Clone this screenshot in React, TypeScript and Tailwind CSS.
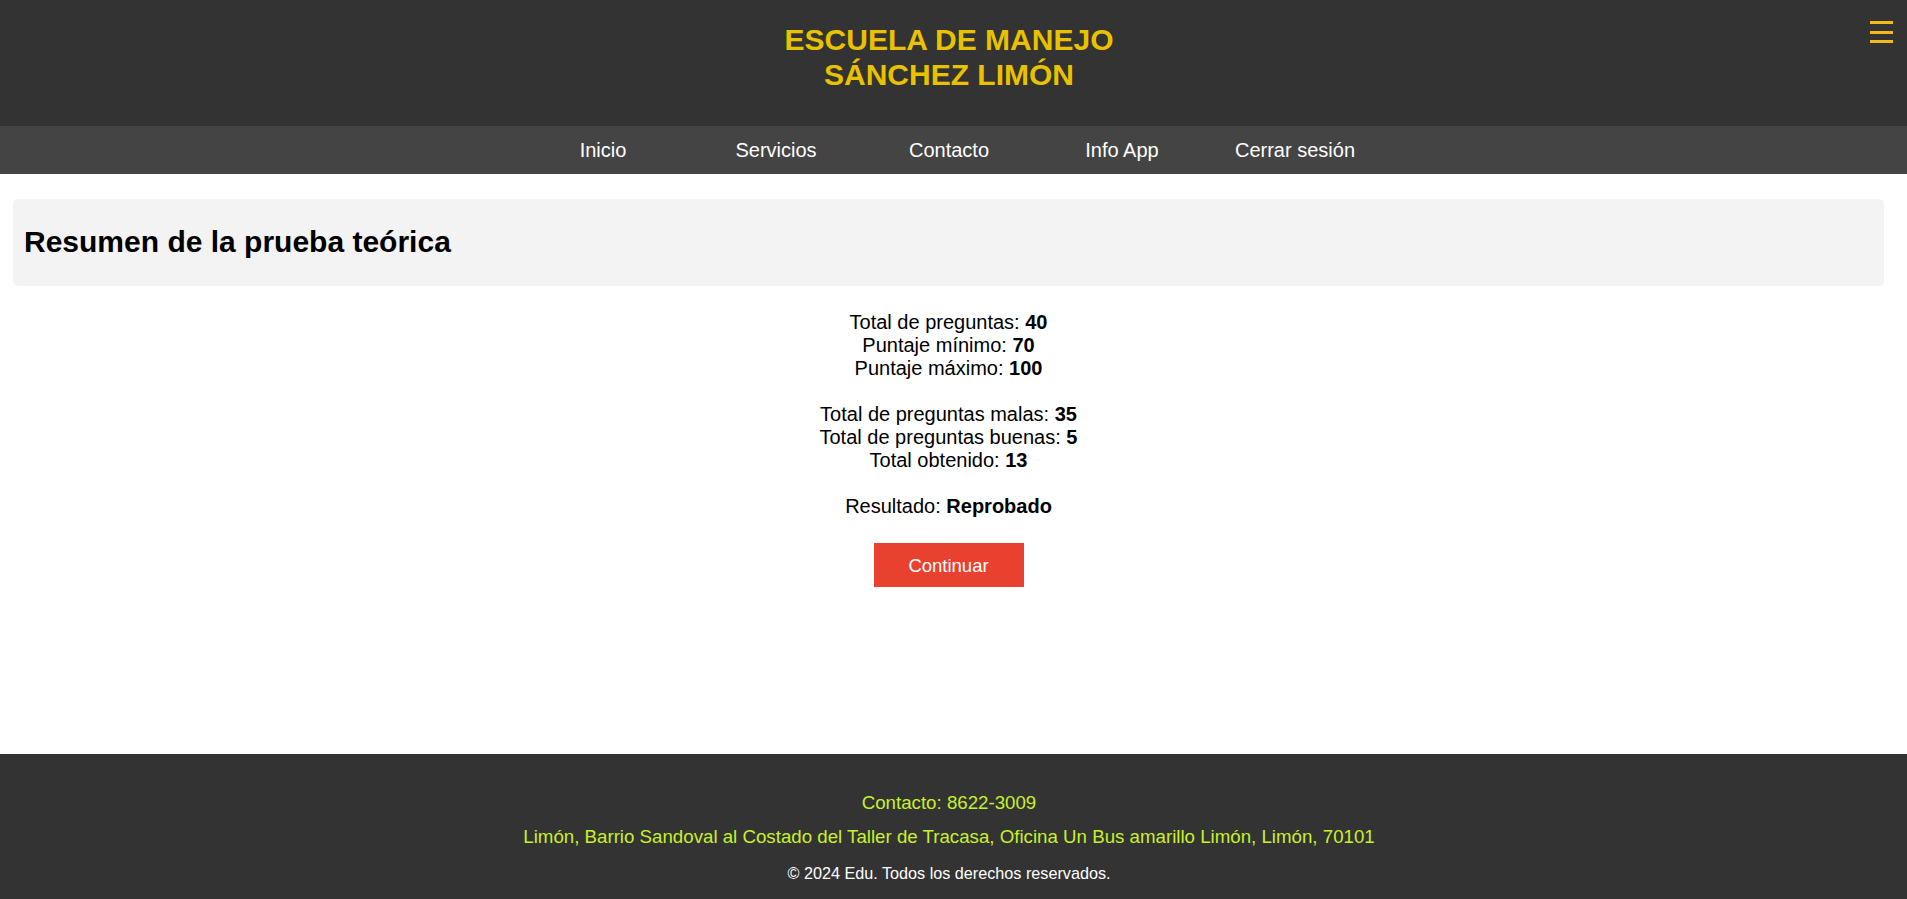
import React from "react";

const navItems = ["Inicio", "Servicios", "Contacto", "Info App", "Cerrar sesión"];

function Stat({ label, value }: { label: string; value: string }) {
  return (
    <p>
      {label} <b>{value}</b>
    </p>
  );
}

export default function App() {
  return (
    <div className="min-h-screen flex flex-col bg-white font-['Liberation_Sans',Arial,sans-serif] text-black">
      <header className="relative h-[126px] bg-[#333333] pt-[23px] pr-[9px] text-center">
        <h1 className="text-[30px] font-bold leading-[34.5px] text-[#e8c200]">
          ESCUELA DE MANEJO
          <br />
          SÁNCHEZ LIMÓN
        </h1>
        <button className="absolute right-[14px] top-[21px] flex w-[23px] flex-col gap-[6.5px]">
          <span className="h-[3px] w-full bg-[#f5b918]" />
          <span className="h-[3px] w-full bg-[#f5b918]" />
          <span className="h-[3px] w-full bg-[#f5b918]" />
        </button>
      </header>

      <nav className="flex h-[48px] items-center justify-center bg-[#444444] pr-[9px]">
        {navItems.map((item) => (
          <a key={item} className="w-[173px] text-center text-[20px] leading-[23px] text-white">
            {item}
          </a>
        ))}
      </nav>

      <main className="flex-1 pl-[13px] pr-[23px] pt-[25px]">
        <div className="rounded-[5px] bg-[#f3f3f3] pl-[11px] pt-[26px] pb-[27px]">
          <h2 className="text-[30px] font-bold leading-[34px]">Resumen de la prueba teórica</h2>
        </div>

        <div className="mt-[25px] text-center text-[20px] leading-[23px]">
          <Stat label="Total de preguntas:" value="40" />
          <Stat label="Puntaje mínimo:" value="70" />
          <Stat label="Puntaje máximo:" value="100" />
          <div className="h-[23px]" />
          <Stat label="Total de preguntas malas:" value="35" />
          <Stat label="Total de preguntas buenas:" value="5" />
          <Stat label="Total obtenido:" value="13" />
          <div className="h-[23px]" />
          <Stat label="Resultado:" value="Reprobado" />
          <button className="mt-[25px] h-[44px] w-[150px] bg-[#e94130] text-[18.5px] text-white">
            Continuar
          </button>
        </div>
      </main>

      <footer className="h-[145px] bg-[#333333] pt-[38px] pr-[9px] text-center">
        <p className="text-[18.7px] leading-[21px] text-[#c8f02c]">Contacto: 8622-3009</p>
        <p className="mt-[13px] text-[18.7px] leading-[21px] text-[#c8f02c]">
          Limón, Barrio Sandoval al Costado del Taller de Tracasa, Oficina Un Bus amarillo Limón, Limón, 70101
        </p>
        <p className="mt-[17px] text-[16.2px] leading-[18px] text-white">© 2024 Edu. Todos los derechos reservados.</p>
      </footer>
    </div>
  );
}
